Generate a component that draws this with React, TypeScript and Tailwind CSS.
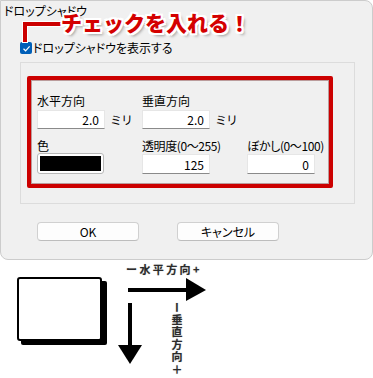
export default function App() {
  const jp = "font-['Noto_Sans_CJK_JP','Noto_Sans',sans-serif]";
  const palt = "[font-feature-settings:'palt']";
  const input =
    "w-[68px] bg-white border border-[#e6e6e6] border-b-[#8a8a8a] text-right pr-[5px] text-[12px]";
  return (
    <div className={`relative flex flex-col w-[373px] h-[378px] bg-white overflow-hidden text-black ${jp}`}>
      {/* Dialog */}
      <div className="flex flex-col shrink-0 w-[373px] h-[260px] bg-[#f0f0f0] border border-[#cccccc] rounded-tr-[8px] rounded-b-[8px] box-border">
        <div className={`pl-[3px] pt-[2px] text-[12px] leading-[16px] ${palt}`}>ドロップシャドウ</div>
        <div className="flex items-center mt-[22px] ml-[19px] h-[14px]">
          <div className="flex items-center justify-center w-[12px] h-[12px] bg-[#005fb8] rounded-[2px]">
            <svg width="9" height="9" viewBox="0 0 9 9">
              <path d="M1.5 4.8 L3.6 6.8 L7.6 2.4" fill="none" stroke="#fff" strokeWidth="1.2" />
            </svg>
          </div>
          <span className={`ml-[1px] text-[12px] leading-[14px] ${palt}`}>ドロップシャドウを表示する</span>
        </div>
        <div className="mt-[7px] ml-[19px] w-[335px] h-[142px] border border-[#dcdcdc] box-border pl-[6px] pt-[13px]">
          <div className="w-[306px] h-[112px] border-[4px] border-[#cc0000] rounded-[2px] box-border pl-[6px] pt-[14px] shadow-[inset_0_0_0_1px_rgba(90,0,0,0.35)]">
            <div className="grid grid-cols-[105px_105px_105px]">
              <div className="flex flex-col">
                <div className="h-[14px] text-[12px] leading-[14px]">水平方向</div>
                <div className="flex items-center mt-[2px]">
                  <div className={`${input} h-[19px] leading-[18px]`}>2.0</div>
                  <span className="ml-[5px] text-[12px] leading-[14px] tracking-[-1px]">ミリ</span>
                </div>
              </div>
              <div className="flex flex-col">
                <div className="h-[14px] text-[12px] leading-[14px]">垂直方向</div>
                <div className="flex items-center mt-[2px]">
                  <div className={`${input} h-[19px] leading-[18px]`}>2.0</div>
                  <span className="ml-[5px] text-[12px] leading-[14px] tracking-[-1px]">ミリ</span>
                </div>
              </div>
              <div />
              <div className="flex flex-col mt-[10px]">
                <div className="h-[14px] text-[12px] leading-[14px]">色</div>
                <div className="mt-0 w-[67px] h-[21px] bg-white border border-[#b8b8b8] rounded-[3px] p-[2px] box-border">
                  <div className="w-full h-full bg-black" />
                </div>
              </div>
              <div className="flex flex-col mt-[10px]">
                <div className={`h-[14px] text-[12px] leading-[14px] tracking-[-0.4px] ${palt}`}>透明度(0〜255)</div>
                <div className={`${input} mt-[1px] h-[20px] leading-[19px]`}>125</div>
              </div>
              <div className="flex flex-col mt-[10px]">
                <div className={`h-[14px] text-[12px] leading-[14px] tracking-[-0.4px] ${palt}`}>ぼかし(0〜100)</div>
                <div className={`${input} mt-[1px] h-[20px] leading-[19px]`}>0</div>
              </div>
            </div>
          </div>
        </div>
        <div className="flex mt-[18px] ml-[36px] gap-[38px]">
          <div className="flex items-center justify-center w-[102px] h-[19px] bg-[#fdfdfd] border border-[#d0d0d0] border-b-[#bdbdbd] rounded-[4px] text-[12px] leading-[14px]">OK</div>
          <div className={`flex items-center justify-center w-[102px] h-[19px] bg-[#fdfdfd] border border-[#d0d0d0] border-b-[#bdbdbd] rounded-[4px] text-[12px] leading-[14px] ${palt}`}>キャンセル</div>
        </div>
      </div>

      {/* Diagram */}
      <div className="relative h-[118px] shrink-0">
        <svg className="absolute left-0 top-0" width="373" height="118" viewBox="0 0 373 118">
          <rect x="21" y="21" width="86" height="64" rx="2" fill="#000" />
          <rect x="18" y="18" width="83" height="62" rx="2" fill="#fff" stroke="#000" strokeWidth="2" />
          <rect x="128" y="28" width="60" height="4" fill="#000" />
          <polygon points="186,18 206,30 186,41" fill="#000" />
          <rect x="128" y="43" width="4" height="44" fill="#000" />
          <polygon points="118,85 142,85 130,104" fill="#000" />
        </svg>
        <div className="absolute left-[126px] top-[2px] text-[11px] leading-[14px] font-bold tracking-[2.4px] text-[#2b2b2b] [text-shadow:0_0_1px_#aaa] whitespace-nowrap">
          ー水平方向+
        </div>
        <div className="absolute left-[171px] top-[42px] text-[11px] leading-[12px] font-bold tracking-[1.4px] text-[#2b2b2b] [writing-mode:vertical-rl] [text-shadow:0_0_1px_#aaa] whitespace-nowrap">
          ー垂直方向＋
        </div>
      </div>

      {/* Callout overlay */}
      <svg className="absolute left-0 top-0" width="80" height="50" viewBox="0 0 80 50">
        <polyline points="25,43 25,24 70,24" fill="none" stroke="#ffffff" strokeWidth="6" strokeLinejoin="miter" />
        <polyline points="25,42 25,24 70,24" fill="none" stroke="#cc0000" strokeWidth="4" strokeLinejoin="miter" />
      </svg>
      <div className="absolute left-[61px] top-[8px] text-[21px] leading-[28px] font-black text-[#d40000] whitespace-nowrap [text-shadow:2px_0_0_#fff,-2px_0_0_#fff,0_2px_0_#fff,0_-2px_0_#fff,2px_2px_0_#fff,-2px_-2px_0_#fff,2px_-2px_0_#fff,-2px_2px_0_#fff,3px_3px_3px_rgba(0,0,0,0.35)]">
        チェックを入れる！
      </div>
    </div>
  );
}
